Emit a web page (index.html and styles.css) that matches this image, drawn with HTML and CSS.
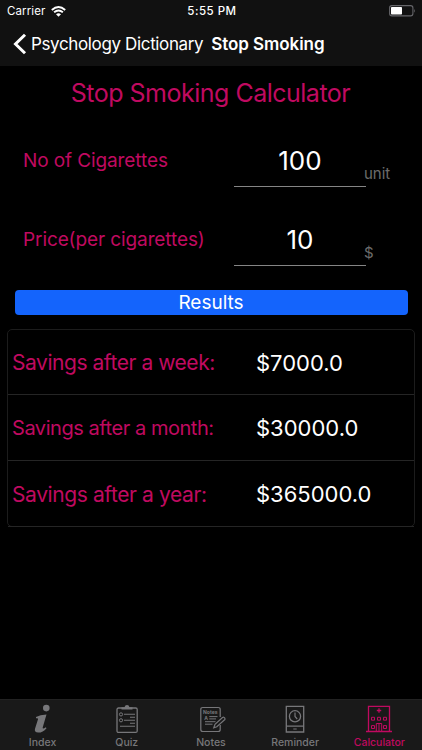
FILE: index.html
```html
<!DOCTYPE html>
<html lang="en">
<head>
<meta charset="utf-8">
<title>Stop Smoking</title>
<link rel="stylesheet" href="styles.css">
</head>
<body>
<div class="app">
  <header class="header">
    <div class="status">
      <div class="status-left">
        <span class="carrier">Carrier</span>
        <svg class="wifi" width="15" height="11" viewBox="0 0 15 11"><path d="M.8 3.9Q7.500-1.700 14.200 3.900M3.100 6.300Q7.500 2.700 11.900 6.300" fill="none" stroke="#fff" stroke-width="1.900"/><path d="M5 8.200Q7.500 6.200 10 8.200L7.500 10.800Z" fill="#fff"/></svg>
      </div>
      <span class="time">5:55 PM</span>
      <svg class="battery" width="27" height="12" viewBox="0 0 27 12"><rect x=".6" y=".6" width="23.300" height="10.300" rx="2.300" fill="none" stroke="#66666a" stroke-width="1.100"/><rect x="2" y="2" width="11" height="7.500" rx=".8" fill="#fff"/><path d="M25.100 3.800q1.600 2 0 4z" fill="#66666a"/></svg>
    </div>
    <nav class="navbar">
      <svg class="back" width="14" height="22" viewBox="0 0 14 22"><path d="M12 1.700 2.500 11 12 20.300" fill="none" stroke="#fff" stroke-width="3"/></svg>
      <span class="back-label">Psychology Dictionary</span>
      <span class="nav-title">Stop Smoking</span>
    </nav>
  </header>
  <main class="content">
    <h1 class="title"><span>Stop Smoking Calculator</span></h1>
    <div class="field">
      <span class="label label-count">No of Cigarettes</span>
      <span class="input">100</span>
      <span class="unit">unit</span>
    </div>
    <div class="field">
      <span class="label label-price">Price(per cigarettes)</span>
      <span class="input">10</span>
      <span class="unit">$</span>
    </div>
    <div class="results"><span>Results</span></div>
    <div class="table">
      <div class="row"><span class="name week">Savings after a week:</span><span class="value">$7000.0</span></div>
      <div class="row"><span class="name month">Savings after a month:</span><span class="value">$30000.0</span></div>
      <div class="row"><span class="name year">Savings after a year:</span><span class="value">$365000.0</span></div>
    </div>
  </main>
  <footer class="tabs">
    <div class="tab">
      <svg width="30" height="30" viewBox="0 0 30 30"><circle cx="18.300" cy="4.100" r="3.300" fill="currentColor"/><path d="M8 13Q12 10.600 18.500 10.500L14.700 23.500Q14.500 25.600 17.800 23.300L18.500 24.200Q14.800 28.700 10.200 28.600Q6 28.200 7 24.700L10 15.200Q10.300 13.700 8 14.300Z" fill="currentColor"/></svg>
      <span>Index</span>
    </div>
    <div class="tab">
      <svg width="30" height="30" viewBox="0 0 30 30" fill="none" stroke="currentColor"><rect x="5" y="4" width="20.200" height="24.400" rx="1.500" stroke-width="1.300"/><path d="M9.500 5.500V3.200H12.500Q13 1 15 1T17.500 3.200H20.500V5.500Z" fill="currentColor" stroke="none"/><path d="M12 10.300H23M18 13.300H23M12 16.300H23M18 19.300H23M8 22.200H23" stroke-width="1.100"/><circle cx="9" cy="10.400" r="1.600"/><circle cx="9" cy="16.300" r="1.600"/></svg>
      <span>Quiz</span>
    </div>
    <div class="tab">
      <svg width="30" height="30" viewBox="0 0 30 30" fill="none" stroke="currentColor"><path d="M24.200 13V5.500Q24.200 3.500 22.200 3.500H6.800Q4.800 3.500 4.800 5.500V25.500Q4.800 27.500 6.800 27.500H22.200Q24.200 27.500 24.200 25.500V21" stroke-width="1.200"/><text x="7" y="9.800" class="icon-word" textLength="14.500">Notes</text><text x="8.200" y="16.100" class="icon-word">A</text><path d="M13.300 12.600H21.500M13.300 14.900H20M9 17.700H19.500M9 20.200H16.500" stroke-width="1"/><path d="M17.800 23.700 19 20.300 26.500 13.500Q28 12.700 28.700 14.100T28.300 16L20.800 22.700Z" fill="#191919" stroke-width="1.200"/></svg>
      <span>Notes</span>
    </div>
    <div class="tab">
      <svg width="30" height="30" viewBox="0 0 30 30" fill="none" stroke="currentColor"><path d="M6.300 2.300H23.700V28H6.300ZM6.300 22.200H23.700" stroke-width="1.300"/><circle cx="15" cy="12.300" r="5.600" stroke-width="1.300"/><path d="M15 8.500V12.500L17.200 15M13.300 25H16.700" stroke-width="1.200"/></svg>
      <span>Reminder</span>
    </div>
    <div class="tab active">
      <svg width="30" height="30" viewBox="0 0 30 30" fill="none" stroke="currentColor"><path d="M4.500 27.500V2.300H25.500V27.500M2 27.500H28M15 4.300V8.700M12.800 6.500H17.200" stroke-width="1.300"/><path d="M7.500 13.300h3v2.900h-3zM13.500 13.300h3v2.900h-3zM19.500 13.300h3v2.900h-3zM7.500 21.600h3v2.900h-3zM19.500 21.600h3v2.900h-3zM12.300 27.500V19.500H17.700V27.500M15 20V27.500"/></svg>
      <span>Calculator</span>
    </div>
  </footer>
</div>
</body>
</html>
```
FILE: styles.css
```css
* { box-sizing: border-box; }
body { margin: 0; background: #000; color: #fff; font-family: Inter, "Liberation Sans", sans-serif; }
span { white-space: nowrap; }
svg { display: block; flex: none; }
.app { width: 422px; height: 750px; display: flex; flex-direction: column; overflow: hidden; }
.header { height: 66px; background: #111; }
.status { height: 22px; display: grid; grid-template-columns: 1fr auto 1fr; align-items: center; padding: 0 7px; }
.status-left { display: flex; align-items: center; gap: 6px; }
.carrier { font-size: 11.5px; letter-spacing: 0.1px; }
.time { font-size: 11.5px; font-weight: 500; letter-spacing: 0.5px; padding-left: 2px; }
.battery { justify-self: end; margin-right: -1px; margin-top: -1px; }
.navbar { height: 43px; display: flex; align-items: center; padding-left: 13px; }
.back-label { margin-left: 4px; padding-top: 1px; font-size: 17px; letter-spacing: -0.36px; }
.nav-title { margin-left: 8px; padding-top: 1px; font-size: 17px; font-weight: 600; letter-spacing: -0.07px; }
.content { flex: 1; }
.title { margin: 0; height: 54px; padding-right: 1px; text-align: center; font-size: 25px; font-weight: 400; letter-spacing: -0.5px; line-height: 54px; color: #c00a60; }
.field { height: 79px; display: grid; grid-template-columns: 211px 132px 1fr; padding-left: 23px; }
.label { font-size: 19px; font-weight: 400; letter-spacing: -0.1px; line-height: 82px; color: #c00a60; }
.input { height: 67px; border-bottom: 1px solid #858585; text-align: center; font-size: 26px; line-height: 81px; }
.unit { margin-left: -2px; font-size: 15px; line-height: 107px; color: #6c6c6c; }
.results { height: 25px; margin: 12px 14.5px 0; border-radius: 4px; background: #1464fc; text-align: center; font-size: 19px; line-height: 26px; font-weight: 400; }
.table { margin: 14px 7px 0; height: 198px; border: 1px solid #1c1c1c; border-radius: 5px; display: grid; grid-template-rows: 65px 66px 66px; }
.row { display: grid; grid-template-columns: 244px 1fr; align-items: center; padding: 1px 0 0 4px; border-bottom: 1px solid #252525; }
.name { font-size: 21px; color: #c00a60; letter-spacing: -0.45px; }
.name.month { font-size: 20px; }
.name.year { letter-spacing: -0.4px; }
.value { font-size: 22px; }
.tabs { height: 51px; background: #191919; border-top: 1px solid #222; display: grid; grid-template-columns: repeat(5, 84.2px); padding: 4px 0 0 0.5px; }
.tab { display: flex; flex-direction: column; align-items: center; color: #77777a; font-size: 10.5px; line-height: 14px; font-weight: 500; }
.tab span { margin-top: 2px; }
.tab.active { color: #c00a60; }
.icon-word { font: 700 5px Inter, sans-serif; fill: currentColor; stroke: none; }
```
